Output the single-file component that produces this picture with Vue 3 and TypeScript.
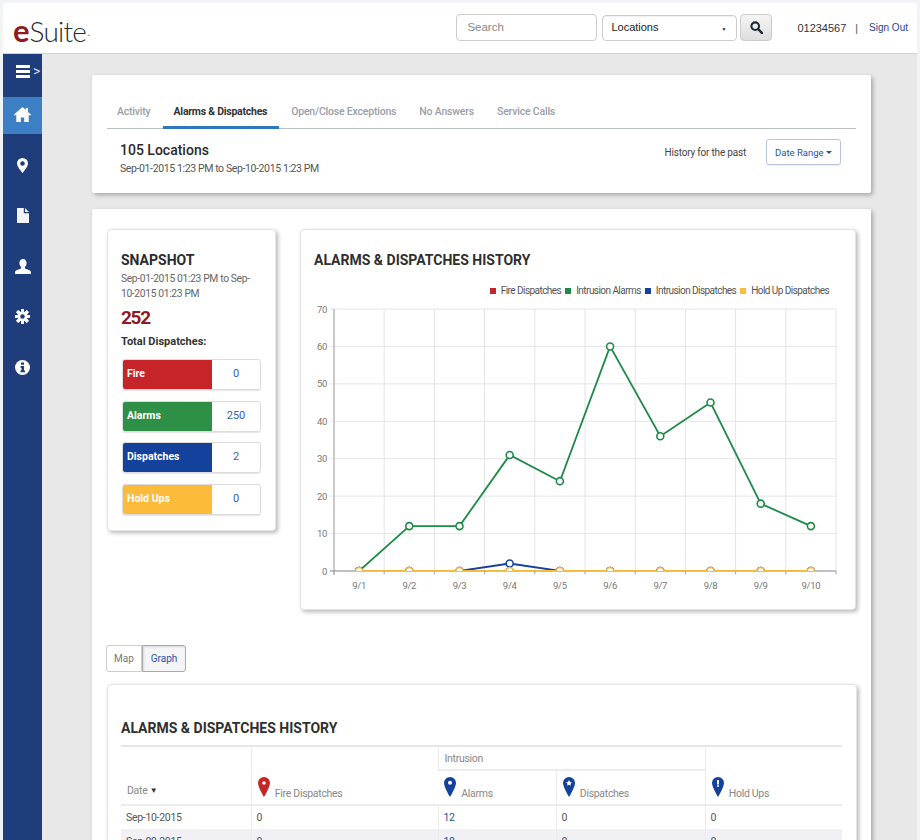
<script setup lang="ts">
const tabs = [
  { label: 'Activity', active: false },
  { label: 'Alarms & Dispatches', active: true },
  { label: 'Open/Close Exceptions', active: false },
  { label: 'No Answers', active: false },
  { label: 'Service Calls', active: false },
]
const snapshot = [
  { label: 'Fire', value: 0, color: '#c62428' },
  { label: 'Alarms', value: 250, color: '#2e8f46' },
  { label: 'Dispatches', value: 2, color: '#14419b' },
  { label: 'Hold Ups', value: 0, color: '#fdbb3c' },
]
const legend = [
  { label: 'Fire Dispatches', color: '#c62428' },
  { label: 'Intrusion Alarms', color: '#1e8a47' },
  { label: 'Intrusion Dispatches', color: '#14419b' },
  { label: 'Hold Up Dispatches', color: '#fdbb3c' },
]

const plotLeft = 34
const plotTop = 79
const plotW = 502
const plotH = 262
const cols = 10
const colW = plotW / cols
const yOf = (v: number) => plotTop + plotH - (v / 70) * plotH
const xOf = (i: number) => plotLeft + colW * (i + 0.5)
const yTicks = [0, 10, 20, 30, 40, 50, 60, 70]
const xTicks = Array.from({ length: cols + 1 }, (_, i) => plotLeft + colW * i)
const labels = ['9/1', '9/2', '9/3', '9/4', '9/5', '9/6', '9/7', '9/8', '9/9', '9/10']

const mk = (color: string, data: number[]) => ({
  color,
  pts: data.map((v, i) => ({ x: xOf(i), y: yOf(v) })),
  line: data.map((v, i) => `${xOf(i).toFixed(1)},${yOf(v).toFixed(1)}`).join(' '),
})
const series = [
  mk('#c62428', [0, 0, 0, 0, 0, 0, 0, 0, 0, 0]),
  mk('#1e8a47', [0, 12, 12, 31, 24, 60, 36, 45, 18, 12]),
  mk('#14419b', [0, 0, 0, 2, 0, 0, 0, 0, 0, 0]),
  mk('#f5b93e', [0, 0, 0, 0, 0, 0, 0, 0, 0, 0]),
]
const rows = [
  { date: 'Sep-10-2015', fire: 0, alarms: 12, disp: 0, hold: 0 },
  { date: 'Sep-09-2015', fire: 0, alarms: 18, disp: 0, hold: 0 },
]
const gearTeeth = [0, 45, 90, 135, 180, 225, 270, 315]
</script>

<template>
  <div class="page">
    <header class="topbar">
      <div class="logo"><span class="logo-e">e</span><span class="logo-rest">Suite</span><span class="logo-tm">™</span></div>
      <div class="controls">
        <input class="search" placeholder="Search" />
        <div class="select"><span>Locations</span><span class="caret">▼</span></div>
        <button class="search-btn" aria-label="Search">
          <svg width="13" height="13" viewBox="0 0 14 14"><circle cx="5.6" cy="5.6" r="4.1" fill="none" stroke="#1c2b3a" stroke-width="2.2" /><path d="M8.8 8.8 13 13" stroke="#1c2b3a" stroke-width="2.6" stroke-linecap="round" /></svg>
        </button>
        <span class="account">01234567</span>
        <span class="pipe">|</span>
        <a class="signout">Sign Out</a>
      </div>
    </header>

    <div class="body">
      <nav class="sidebar">
        <div class="toggle">
          <svg width="14" height="13" viewBox="0 0 14 13"><path d="M0 0h14v3H0zM0 5h14v3H0zM0 10h14v3H0z" fill="#fff" /></svg>
          <span class="chev">&gt;</span>
        </div>
        <div class="nav-list">
          <div class="nav-item active">
            <svg width="17" height="15" viewBox="0 0 17 15"><path d="M8.5 0 0 7.6l1 1.1 1.3-1.1V15h4.5v-4.6h3.4V15h4.5V7.6L16 8.7l1-1.1-3-2.7V1h-2.2v1.9z" fill="#fff" /></svg>
          </div>
          <div class="nav-item">
            <svg width="11" height="15" viewBox="0 0 11 15"><path fill-rule="evenodd" d="M5.5 0A5.5 5.5 0 0 0 0 5.5C0 8.8 5.500 15 5.500 15S11 8.800 11 5.500A5.500 5.500 0 0 0 5.500 0zm0 3.200a2.300 2.300 0 1 1 0 4.600 2.300 2.300 0 0 1 0-4.600z" fill="#fff" /></svg>
          </div>
          <div class="nav-item">
            <svg width="12" height="15" viewBox="0 0 12 15"><path d="M0 0h6.800v5.200H12V15H0z" fill="#f2f4f8" /><path d="M8 0l4 4H8z" fill="#f2f4f8" /></svg>
          </div>
          <div class="nav-item">
            <svg width="16" height="15" viewBox="0 0 16 15"><path d="M8 0c2.200 0 3.600 1.700 3.600 4 0 1.700-.8 3.100-1.700 4v1.600c2 .8 6.100 1.700 6.100 3.700V15H0v-1.700c0-2 4.100-2.900 6.100-3.700V8C5.200 7.100 4.400 5.700 4.400 4 4.400 1.700 5.800 0 8 0z" fill="#fff" /></svg>
          </div>
          <div class="nav-item">
            <svg width="15" height="15" viewBox="0 0 15 15">
              <rect v-for="a in gearTeeth" :key="a" x="6" y="0" width="3" height="15" rx="0.6" fill="#fff" :transform="`rotate(${a} 7.5 7.5)`" />
              <circle cx="7.5" cy="7.5" r="5" fill="#fff" />
              <circle cx="7.5" cy="7.5" r="2.200" fill="#1f3d7a" />
            </svg>
          </div>
          <div class="nav-item">
            <svg width="15" height="15" viewBox="0 0 15 15"><circle cx="7.5" cy="7.5" r="7.500" fill="#fff" /><path d="M6 2.600h3v2.200H6zM5.600 6.100h3.400v4.400h1v1.800H5.400v-1.800h1.100V7.900h-.9z" fill="#1f3d7a" /></svg>
          </div>
        </div>
      </nav>

      <main class="main">
        <section class="card top-card">
          <div class="tabs">
            <a v-for="t in tabs" :key="t.label" class="tab" :class="{ on: t.active }">{{ t.label }}</a>
          </div>
          <div class="summary">
            <div>
              <div class="loc">105 Locations</div>
              <div class="range">Sep-01-2015 1:23 PM to Sep-10-2015 1:23 PM</div>
            </div>
            <div class="history">
              <span>History for the past</span>
              <button class="date-btn">Date Range <i class="mini-caret"></i></button>
            </div>
          </div>
        </section>

        <section class="card content-card">
          <div class="panels">
            <div class="panel snap">
              <h3 class="snap-title">SNAPSHOT</h3>
              <p class="snap-range">Sep-01-2015 01:23 PM to Sep-<br />10-2015 01:23 PM</p>
              <div class="snap-total">252</div>
              <div class="snap-label">Total Dispatches:</div>
              <div class="snap-rows">
                <div v-for="s in snapshot" :key="s.label" class="snap-row">
                  <span class="snap-name" :style="{ background: s.color }">{{ s.label }}</span>
                  <span class="snap-val">{{ s.value }}</span>
                </div>
              </div>
            </div>

            <div class="panel chart">
              <h3 class="panel-title">ALARMS &amp; DISPATCHES HISTORY</h3>
              <div class="legend">
                <span v-for="l in legend" :key="l.label" class="legend-item">
                  <i class="swatch" :style="{ background: l.color }"></i>{{ l.label }}
                </span>
              </div>
              <svg class="plot" width="554" height="310" viewBox="0 50 554 310">
                <defs>
                  <clipPath id="plot-clip"><rect :x="plotLeft" :y="plotTop - 8" :width="plotW" :height="plotH + 8" /></clipPath>
                </defs>
                <line v-for="v in yTicks" :key="'h' + v" :x1="plotLeft - 4" :x2="plotLeft + plotW" :y1="yOf(v)" :y2="yOf(v)" stroke="#e6e6ea" stroke-width="1" />
                <line v-for="(x, i) in xTicks" :key="'v' + i" :x1="x" :x2="x" :y1="plotTop" :y2="plotTop + plotH + 4" stroke="#e4e4e8" stroke-width="1" />
                <line :x1="plotLeft" :x2="plotLeft" :y1="plotTop" :y2="plotTop + plotH + 4" stroke="#bdbdbd" stroke-width="1.500" />
                <line :x1="plotLeft - 4" :x2="plotLeft + plotW" :y1="plotTop + plotH" :y2="plotTop + plotH" stroke="#8f8f8f" stroke-width="1" />
                <line v-for="(x, i) in xTicks" :key="'t' + i" :x1="x" :x2="x" :y1="plotTop + plotH" :y2="plotTop + plotH + 3" stroke="#aaa" stroke-width="1" />
                <text v-for="v in yTicks" :key="'yl' + v" :x="plotLeft - 7" :y="yOf(v) + 3.500" class="axis" text-anchor="end">{{ v }}</text>
                <text v-for="(l, i) in labels" :key="l" :x="xOf(i)" :y="plotTop + plotH + 18" class="axis" text-anchor="middle">{{ l }}</text>
                <g clip-path="url(#plot-clip)">
                  <g v-for="(s, si) in series" :key="si">
                    <polyline :points="s.line" fill="none" :stroke="s.color" stroke-width="1.800" />
                    <circle v-for="(p, pi) in s.pts" :key="pi" :cx="p.x" :cy="p.y" r="3.500" fill="#fff" :stroke="s.color" stroke-width="1.600" />
                  </g>
                </g>
              </svg>
            </div>
          </div>

          <div class="switch">
            <button class="sw">Map</button>
            <button class="sw sel">Graph</button>
          </div>

          <div class="panel table-panel">
            <h3 class="panel-title table-title">ALARMS &amp; DISPATCHES HISTORY</h3>
            <table class="grid">
              <colgroup><col class="c1" /><col class="c2" /><col class="c3" /><col class="c4" /><col class="c5" /></colgroup>
              <thead>
                <tr class="r1">
                  <th rowspan="2" class="th-b th-date">Date <span class="sort">▼</span></th>
                  <th rowspan="2" class="th-b">
                    <svg class="pin" width="12" height="20" viewBox="0 0 12 20"><path fill-rule="evenodd" d="M6 0a6 6 0 0 0-6 6c0 4 6 14 6 14s6-10 6-14a6 6 0 0 0-6-6zm0 4.200a1.800 1.800 0 1 1 0 3.600 1.800 1.800 0 0 1 0-3.600z" fill="#c62428" /></svg>
                    Fire Dispatches
                  </th>
                  <th colspan="2" class="th-top">Intrusion</th>
                  <th rowspan="2" class="th-b">
                    <svg class="pin" width="12" height="20" viewBox="0 0 12 20"><path d="M6 0a6 6 0 0 0-6 6c0 4 6 14 6 14s6-10 6-14a6 6 0 0 0-6-6z" fill="#14419b" /><path d="M5 3h2v4.500H5zM5 8.200h2v1.600H5z" fill="#fff" /></svg>
                    Hold Ups
                  </th>
                </tr>
                <tr class="r2">
                  <th class="th-b">
                    <svg class="pin" width="12" height="20" viewBox="0 0 12 20"><path fill-rule="evenodd" d="M6 0a6 6 0 0 0-6 6c0 4 6 14 6 14s6-10 6-14a6 6 0 0 0-6-6zm0 3.800a2 2 0 1 1 0 4 2 2 0 0 1 0-4z" fill="#14419b" /></svg>
                    Alarms
                  </th>
                  <th class="th-b">
                    <svg class="pin" width="12" height="20" viewBox="0 0 12 20"><path d="M6 0a6 6 0 0 0-6 6c0 4 6 14 6 14s6-10 6-14a6 6 0 0 0-6-6z" fill="#14419b" /><path d="M6 3l1 2 2 .3-1.500 1.400.4 2L6 7.800l-1.900.9.400-2L3 5.300 5 5z" fill="#fff" /></svg>
                    Dispatches
                  </th>
                </tr>
              </thead>
              <tbody>
                <tr v-for="(r, i) in rows" :key="r.date" :class="{ alt: i % 2 === 1 }">
                  <td>{{ r.date }}</td>
                  <td>{{ r.fire }}</td>
                  <td class="link">{{ r.alarms }}</td>
                  <td>{{ r.disp }}</td>
                  <td>{{ r.hold }}</td>
                </tr>
              </tbody>
            </table>
          </div>
        </section>
      </main>
    </div>
  </div>
</template>

<style>
html, body { margin: 0; background: #f1f3f5; }
</style>

<style scoped>
* { box-sizing: border-box; }
.page {
  width: 920px;
  height: 840px;
  overflow: hidden;
  padding: 3px 3px 0;
  background: #f1f3f5;
  font-family: Roboto, "Liberation Sans", sans-serif;
  color: #333;
}
.topbar {
  height: 51px;
  background: #fff;
  border-bottom: 1px solid #d4d4d4;
  display: flex;
  justify-content: space-between;
  align-items: flex-start;
  padding: 0 9px 0 10px;
}
.logo { display: flex; align-items: baseline; margin-top: 12px; line-height: 30px; }
.logo-e { font: 700 31px/30px Lato, sans-serif; color: #8e1b22; }
.logo-rest { font: 300 28px/30px Lato, sans-serif; color: #2c2c2c; letter-spacing: -0.8px; }
.logo-tm { font-size: 5px; color: #333; align-self: flex-start; margin: 6px 0 0 1px; }
.controls { display: flex; align-items: center; margin-top: 11px; font-family: "Liberation Sans", sans-serif; }
.search {
  width: 141px; height: 27px; padding: 0 10px 2px; border: 1px solid #ccc; border-radius: 4px;
  font: 11.500px "Liberation Sans", sans-serif; outline: none;
}
.search::placeholder { color: #888; }
.select {
  width: 135px; height: 26px; margin-left: 5px; padding: 0 10px 2px 8px; border: 1px solid #ccc; border-radius: 4px;
  display: flex; justify-content: space-between; align-items: center; font-size: 11px; color: #222;
  box-shadow: inset 0 1px 1px rgba(0, 0, 0, 0.06);
}
.caret { font-size: 5px; padding-top: 4px; }
.search-btn {
  width: 32px; height: 27px; margin-left: 3px; border: 1px solid #ccc; border-radius: 4px; padding: 0;
  background: linear-gradient(#f5f5f5, #dedede); display: flex; align-items: center; justify-content: center;
}
.account { margin-left: 25px; font-size: 11px; color: #333; }
.pipe { margin: 0 11px 0 9px; font-size: 10.500px; color: #555; }
.signout { font-size: 10px; color: #27458f; }

.body { display: flex; height: 786px; }
.sidebar { width: 39px; flex: none; background: #1f3d7a; }
.toggle { height: 43px; padding: 0 0 9px 13px; display: flex; align-items: center; color: #fff; white-space: nowrap; overflow: hidden; }
.chev { margin-left: 3px; font-size: 14px; color: #d7deec; }
.nav-list { display: flex; flex-direction: column; gap: 13.500px; }
.nav-item { height: 37px; padding-bottom: 2px; display: flex; align-items: center; justify-content: center; }
.nav-item.active { background: #3c7fc4; }

.main { flex: 1; min-width: 0; background: #e8e8e8; padding: 21px 0 0 50px; display: flex; flex-direction: column; gap: 16px; }
.card { width: 779px; background: #fff; box-shadow: 2px 2px 4px rgba(0, 0, 0, 0.28); }
.top-card { height: 118px; padding: 0 15px; border-radius: 2px; flex: none; }
.tabs { display: flex; height: 54px; align-items: flex-end; border-bottom: 1px solid #b9bec6; width: 749px; gap: 1px; }
.tab {
  padding: 0 11px 8px; font-size: 10.500px; letter-spacing: -0.2px; font-weight: 500; color: #9aa0a8; margin-bottom: -1px;
  border-bottom: 3px solid transparent; white-space: nowrap;
}
.tab:first-child { padding-left: 10px; }
.tab.on { color: #333; font-weight: 700; letter-spacing: -0.25px; border-bottom-color: #2b78bb; padding-right: 12px; }
.summary { display: flex; justify-content: space-between; padding: 10px 15px 0 13px; }
.loc { margin-top: 3px; font-size: 14px; font-weight: 500; color: #2b2b2b; line-height: 17px; }
.range { margin-top: 3px; font-size: 10.500px; letter-spacing: -0.38px; color: #555; }
.history { display: flex; align-items: center; gap: 20px; font-size: 10px; letter-spacing: -0.2px; color: #444; height: 26px; }
.date-btn {
  width: 75px; height: 26px; padding: 0; background: #fff; border: 1px solid #b9c7dd; border-radius: 3px;
  font: 9.500px Roboto, sans-serif; color: #2a52a0; box-shadow: 0 1px 1px rgba(0, 0, 0, 0.08);
}
.mini-caret { display: inline-block; border: 3px solid transparent; border-top-color: #2a52a0; border-bottom: 0; vertical-align: middle; }

.content-card { flex: 1; padding: 20px 15px 0; border-radius: 2px 2px 0 0; }
.panels { display: flex; align-items: flex-start; gap: 24px; }
.panel { background: #fff; border: 1px solid #e4e4e4; border-radius: 4px; box-shadow: 2px 2px 4px rgba(0, 0, 0, 0.28); }
.snap { width: 169px; height: 302px; padding: 21px 13px; }
.snap-title { margin: 0; font-size: 14px; font-weight: 700; line-height: 18px; color: #2b2b2b; }
.snap-range { margin: 2px 0 0; font-size: 10.300px; letter-spacing: -0.35px; line-height: 15px; color: #666; white-space: nowrap; }
.snap-total { margin-top: 5px; font-size: 19px; letter-spacing: -1.300px; font-weight: 700; color: #8e1b22; line-height: 24px; }
.snap-label { margin-top: 5px; font-size: 11px; font-weight: 700; color: #333; line-height: 14px; }
.snap-rows { margin: 10px 0 0 1px; display: flex; flex-direction: column; gap: 10.500px; }
.snap-row { width: 139px; height: 31px; display: flex; border: 1px solid #dcdcdc; border-radius: 3px; box-shadow: 0 1px 1px rgba(0, 0, 0, 0.1); overflow: hidden; }
.snap-name { width: 89px; padding-left: 4px; font-size: 10.500px; font-weight: 700; color: #fff; line-height: 28px; }
.snap-val { flex: 1; text-align: center; font-size: 11px; color: #3263b0; line-height: 28px; }

.chart { width: 556px; height: 381px; }
.panel-title { margin: 0; font-size: 14px; font-weight: 700; color: #2f2f2f; line-height: 18px; }
.chart .panel-title { padding: 21px 0 0 13px; }
.legend { display: flex; justify-content: flex-end; gap: 4px; padding: 15px 26px 0 0; font-size: 10px; letter-spacing: -0.55px; color: #555; line-height: 14px; height: 29px; }
.legend-item { display: flex; align-items: center; }
.swatch { width: 6px; height: 6px; margin-right: 5px; }
.plot { display: block; margin: -18px 0 0 -1px; }
.axis { font-size: 9.500px; letter-spacing: -0.3px; fill: #777; font-family: Roboto, sans-serif; }

.switch { display: flex; margin: 35px 0 0 -1px; }
.sw {
  width: 36px; height: 27px; padding: 0; border: 1px solid #ccc; background: #fff; border-radius: 3px 0 0 3px;
  font: 10px Roboto, sans-serif; color: #777;
}
.sw.sel { width: 44px; border-radius: 0 3px 3px 0; border-color: #aaa; background: #f5f5f7; color: #2a52a0; box-shadow: inset 1px 1px 2px rgba(0, 0, 0, 0.12); }

.table-panel { width: 750px; margin-top: 12px; padding: 33px 14px 0 13px; height: 200px; }
.table-title { line-height: 20px; }
.grid { width: 721px; margin-top: 7px; table-layout: fixed; border-collapse: collapse; border-top: 2px solid #e6e6e6; font-size: 10.500px; letter-spacing: -0.3px; }
.c1 { width: 130px; }
.c2 { width: 187px; }
.c3 { width: 118px; }
.c4 { width: 149px; }
.c5 { width: 137px; }
.grid th { font-weight: 400; color: #888; text-align: left; padding: 0 6px; border-left: 1px solid #ececec; border-bottom: 2px solid #ececec; }
.grid th:first-child { border-left: 0; }
.r1 { height: 24px; }
.r2 { height: 35px; }
.th-b { vertical-align: bottom; padding-bottom: 4px !important; }
.th-date { padding-bottom: 7px !important; }
.th-top { vertical-align: middle; }
.pin { margin-right: 3px; }
.sort { color: #333; font-size: 8px; vertical-align: 1px; }
.grid td { height: 24px; padding: 0 5px; color: #555; border-left: 1px solid #ececec; }
.grid td:first-child { border-left: 0; }
.grid td.link { color: #2a52a0; }
.alt td { background: #f1f1f5; }
</style>
